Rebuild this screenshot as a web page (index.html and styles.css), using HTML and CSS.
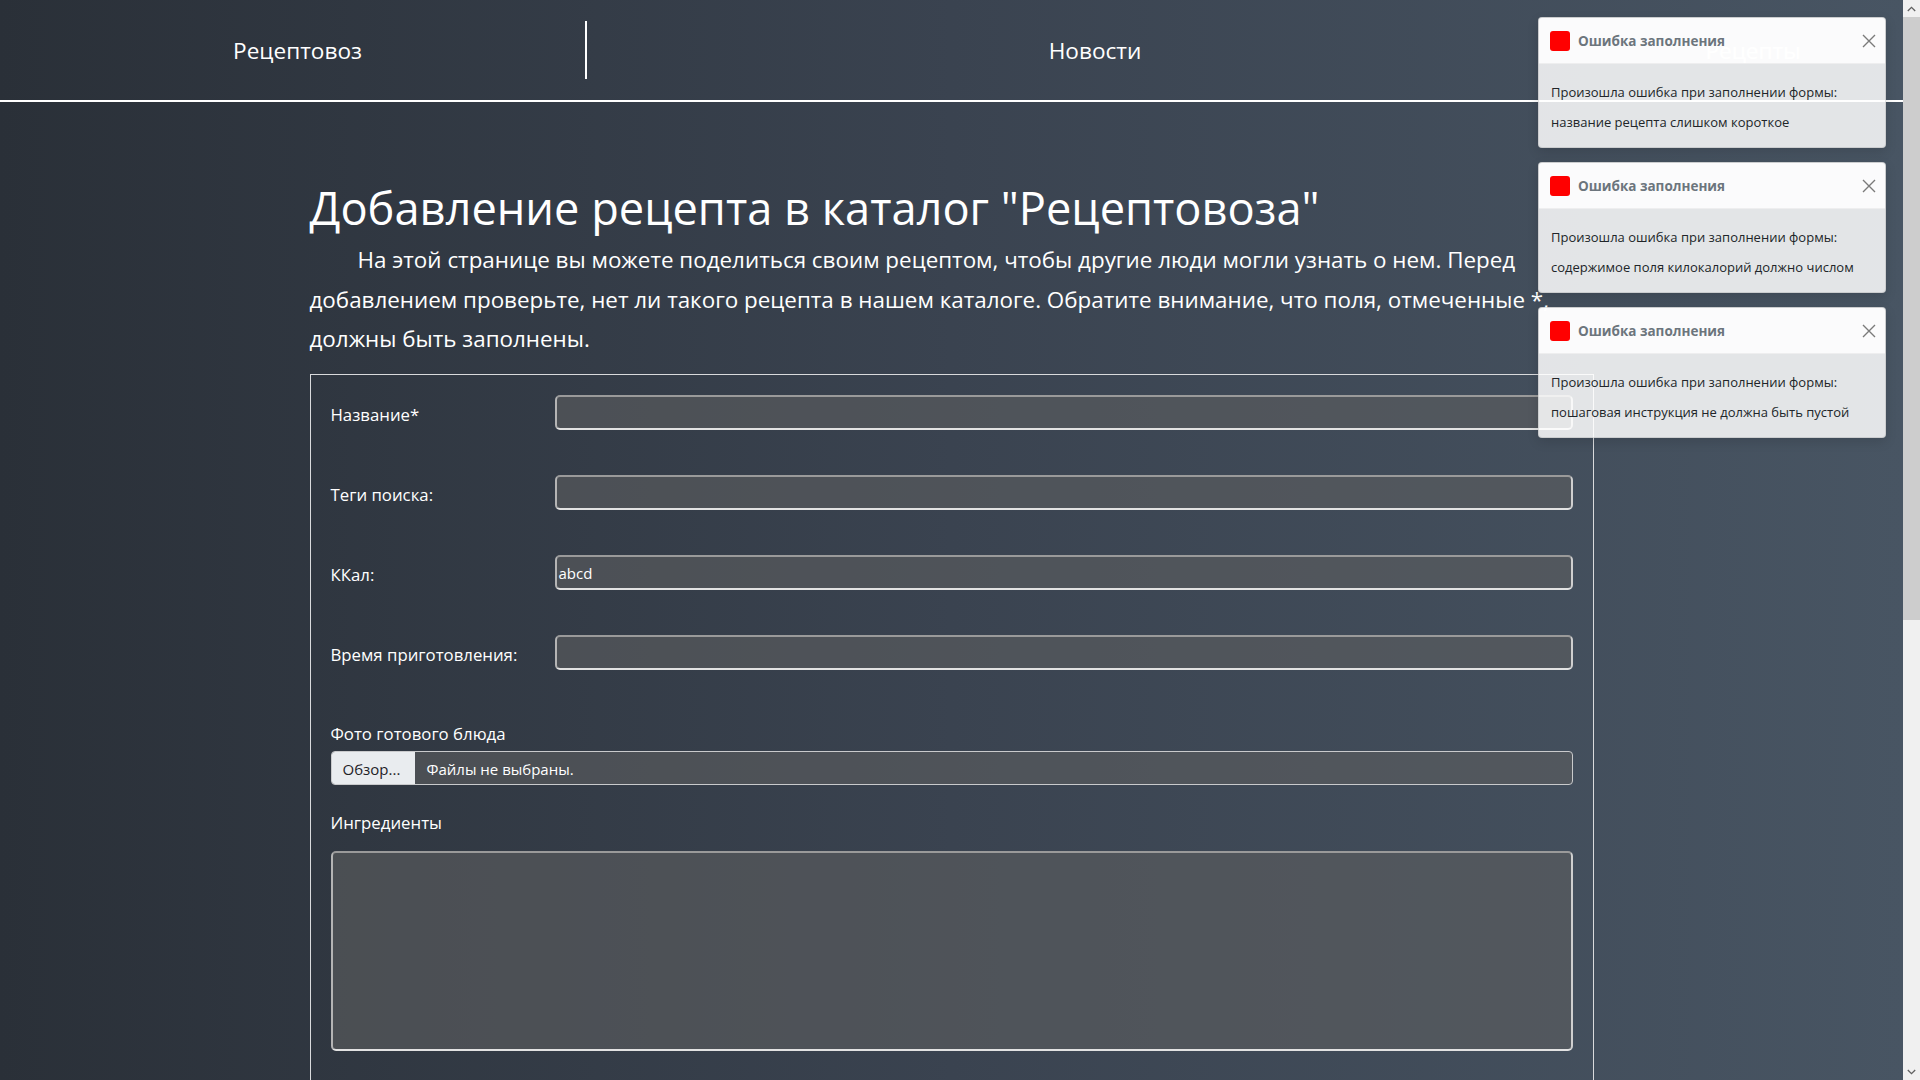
FILE: index.html
```html
<!DOCTYPE html>
<html lang="ru">
<head>
<meta charset="utf-8">
<title>Добавление рецепта</title>
<link rel="stylesheet" href="styles.css">
</head>
<body>
<div class="window">
  <div class="page">
    <header class="nav">
      <div class="nav-brand">Рецептовоз</div>
      <div class="nav-link">Новости</div>
      <div class="nav-link">Рецепты</div>
    </header>

    <main class="content">
      <h1 class="title">Добавление рецепта в каталог "Рецептовоза"</h1>
      <p class="intro">На этой странице вы можете поделиться своим рецептом, чтобы другие люди могли узнать о нем. Перед добавлением проверьте, нет ли такого рецепта в нашем каталоге. Обратите внимание, что поля, отмеченные *, должны быть заполнены.</p>

      <form class="recipe-form">
        <div class="form-row">
          <label class="row-label">Название*</label>
          <div class="text-input"></div>
        </div>
        <div class="form-row">
          <label class="row-label">Теги поиска:</label>
          <div class="text-input"></div>
        </div>
        <div class="form-row">
          <label class="row-label">ККал:</label>
          <div class="text-input"><span class="input-value">abcd</span></div>
        </div>
        <div class="form-row form-row-last">
          <label class="row-label">Время приготовления:</label>
          <div class="text-input"></div>
        </div>

        <label class="block-label">Фото готового блюда</label>
        <div class="file-input">
          <span class="file-button">Обзор...</span>
          <span class="file-name">Файлы не выбраны.</span>
        </div>

        <label class="block-label block-label-ingredients">Ингредиенты</label>
        <div class="textarea"></div>
      </form>
    </main>

    <div class="toasts">
      <div class="toast">
        <div class="toast-header">
          <span class="toast-icon"></span>
          <strong class="toast-title">Ошибка заполнения</strong>
          <svg class="toast-close" width="16" height="16" viewBox="0 0 16 16"><path d="M2 2 L14 14 M14 2 L2 14" stroke="#7a7a7a" stroke-width="1.4" fill="none"/></svg>
        </div>
        <div class="toast-body">Произошла ошибка при заполнении формы:<br>название рецепта слишком короткое</div>
      </div>
      <div class="toast">
        <div class="toast-header">
          <span class="toast-icon"></span>
          <strong class="toast-title">Ошибка заполнения</strong>
          <svg class="toast-close" width="16" height="16" viewBox="0 0 16 16"><path d="M2 2 L14 14 M14 2 L2 14" stroke="#7a7a7a" stroke-width="1.4" fill="none"/></svg>
        </div>
        <div class="toast-body">Произошла ошибка при заполнении формы:<br>содержимое поля килокалорий должно числом</div>
      </div>
      <div class="toast">
        <div class="toast-header">
          <span class="toast-icon"></span>
          <strong class="toast-title">Ошибка заполнения</strong>
          <svg class="toast-close" width="16" height="16" viewBox="0 0 16 16"><path d="M2 2 L14 14 M14 2 L2 14" stroke="#7a7a7a" stroke-width="1.4" fill="none"/></svg>
        </div>
        <div class="toast-body">Произошла ошибка при заполнении формы:<br>пошаговая инструкция не должна быть пустой</div>
      </div>
    </div>
  </div>

  <div class="scrollbar">
    <div class="scroll-arrow">
      <svg width="9" height="6" viewBox="0 0 9 6"><path d="M0.8 5 L4.5 1.3 L8.2 5" stroke="#606060" stroke-width="1.3" fill="none"/></svg>
    </div>
    <div class="scroll-thumb"></div>
    <div class="scroll-track"></div>
    <div class="scroll-arrow">
      <svg width="9" height="6" viewBox="0 0 9 6"><path d="M0.8 1 L4.5 4.7 L8.2 1" stroke="#606060" stroke-width="1.3" fill="none"/></svg>
    </div>
  </div>
</div>
</body>
</html>
```

FILE: styles.css
```css
html, body {
  margin: 0;
  padding: 0;
  height: 1080px;
  overflow: hidden;
}

body {
  font-family: "Open Sans", "Noto Sans", sans-serif;
  color: #fff;
}

.window {
  display: flex;
  width: 1920px;
  height: 1080px;
}

.page {
  position: relative;
  flex: 1;
  height: 1080px;
  overflow: hidden;
  background: linear-gradient(to right, #2a3038 0%, #3a4350 50%, #485563 100%);
}

/* ---------- navigation ---------- */
.nav {
  display: grid;
  grid-template-columns: 587px 1016px 1fr;
  align-items: center;
  height: 100px;
  border-bottom: 2px solid #fff;
}

.nav-brand,
.nav-link {
  display: flex;
  align-items: center;
  justify-content: center;
  height: 58px;
  font-size: 22.6px;
  color: #fff;
}

.nav-brand {
  border-right: 2px solid #fff;
  padding-left: 10px;
}

/* ---------- content ---------- */
.content {
  width: 1284px;
  margin: 0 auto;
}

.title {
  margin: 77px 0 0;
  font-size: 45.2px;
  font-weight: 400;
  line-height: 58px;
  color: #fff;
}

.intro {
  margin: 3px 0 15px;
  font-size: 22.4px;
  line-height: 39.6px;
  text-indent: 48px;
  color: #fff;
}

/* ---------- form ---------- */
.recipe-form {
  display: flex;
  flex-direction: column;
  border: 1px solid #d9dadc;
  padding: 20px 20px 40px;
}

.form-row {
  display: grid;
  grid-template-columns: 224px 1fr;
  align-items: center;
  height: 35px;
  margin-bottom: 45px;
}

.form-row-last {
  margin-bottom: 52px;
}

.row-label,
.block-label {
  font-size: 16.8px;
  line-height: 24px;
  color: #fff;
}

.row-label {
  padding-top: 5px;
}

.text-input,
.textarea {
  box-sizing: border-box;
  background: rgba(92, 94, 96, 0.62);
  border: 2px solid;
  border-color: #9a9a9a #cfcfcf #e2e2e2 #b4b4b4;
  border-radius: 5px;
}

.text-input {
  height: 35px;
  display: flex;
  align-items: center;
  padding: 1px 2px 0;
}

.input-value {
  font-size: 15px;
  color: #fff;
}

.block-label {
  margin-bottom: 5px;
}

.file-input {
  box-sizing: border-box;
  display: flex;
  align-items: stretch;
  height: 34px;
  border: 1px solid #c9cacc;
  border-radius: 4px;
  overflow: hidden;
  background: rgba(92, 94, 96, 0.62);
  margin-bottom: 26px;
}

.file-button {
  display: flex;
  align-items: center;
  width: 83px;
  box-sizing: border-box;
  padding: 3px 0 0 11px;
  background: #e9ecef;
  color: #1f2327;
  font-size: 15px;
}

.file-name {
  display: flex;
  align-items: center;
  padding: 3px 0 0 12px;
  font-size: 15px;
  color: #fff;
}

.block-label-ingredients {
  margin-bottom: 16px;
}

.textarea {
  height: 200px;
}

/* ---------- toasts ---------- */
.toasts {
  position: absolute;
  top: 17px;
  right: 17px;
  display: flex;
  flex-direction: column;
  gap: 14px;
  width: 348px;
}

.toast {
  background: rgba(255, 255, 255, 0.85);
  border: 1px solid rgba(0, 0, 0, 0.1);
  border-radius: 4px;
  box-shadow: 0 4px 12px rgba(0, 0, 0, 0.12);
  overflow: hidden;
}

.toast-header {
  display: flex;
  align-items: center;
  height: 45px;
  padding: 0 8px 0 11px;
  background: rgba(255, 255, 255, 0.85);
  border-bottom: 1px solid rgba(0, 0, 0, 0.05);
}

.toast-icon {
  width: 20px;
  height: 20px;
  border-radius: 3px;
  background: #ff0000;
  margin-right: 8px;
}

.toast-title {
  font-size: 13.5px;
  font-weight: 700;
  color: #6c757d;
}

.toast-close {
  margin-left: auto;
}

.toast-body {
  padding: 13px 12px 10px;
  font-size: 13px;
  line-height: 30px;
  color: #212529;
}

/* ---------- scrollbar ---------- */
.scrollbar {
  display: flex;
  flex-direction: column;
  width: 17px;
  height: 1080px;
  background: #f0f0f0;
}

.scroll-arrow {
  display: flex;
  align-items: center;
  justify-content: center;
  height: 17px;
}

.scroll-thumb {
  height: 603px;
  background: #cdcdcd;
}

.scroll-track {
  flex: 1;
}
```
